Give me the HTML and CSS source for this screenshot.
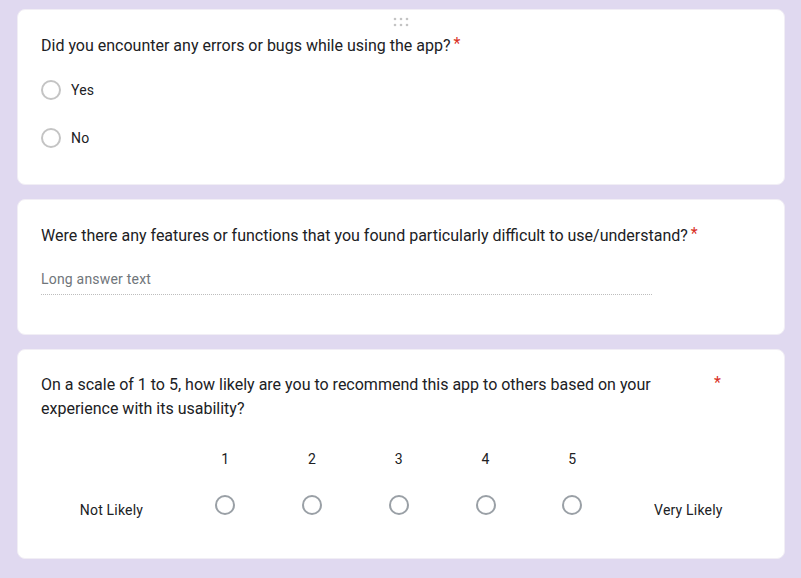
FILE: index.html
```
<!DOCTYPE html>
<html lang="en">
<head>
<meta charset="utf-8">
<title>Usability survey</title>
<link rel="stylesheet" href="styles.css">
</head>
<body>
<div class="page">
  <section class="card card-first">
    <div class="drag-handle">
      <svg width="16" height="10" viewBox="0 0 16 10"><g fill="#c4c4c4"><circle cx="2" cy="2" r="1.3"/><circle cx="8" cy="2" r="1.3"/><circle cx="14" cy="2" r="1.3"/><circle cx="2" cy="8" r="1.3"/><circle cx="8" cy="8" r="1.3"/><circle cx="14" cy="8" r="1.3"/></g></svg>
    </div>
    <div class="title"><span class="title-text">Did you encounter any errors or bugs while using the app?</span><span class="req">*</span></div>
    <div class="options">
      <div class="option"><span class="radio"></span><span class="option-label">Yes</span></div>
      <div class="option"><span class="radio"></span><span class="option-label">No</span></div>
    </div>
  </section>

  <section class="card card-second">
    <div class="title"><span class="title-text">Were there any features or functions that you found particularly difficult to use/understand?</span><span class="req">*</span></div>
    <div class="long-answer">Long answer text</div>
  </section>

  <section class="card card-third">
    <div class="title"><span class="title-text">On a scale of 1 to 5, how likely are you to recommend this app to others based on your experience with its usability?</span><span class="req">*</span></div>
    <div class="scale">
      <span class="num n1">1</span>
      <span class="num n2">2</span>
      <span class="num n3">3</span>
      <span class="num n4">4</span>
      <span class="num n5">5</span>
      <span class="scale-label left">Not Likely</span>
      <span class="scale-radio c1"><span class="radio dark"></span></span>
      <span class="scale-radio c2"><span class="radio dark"></span></span>
      <span class="scale-radio c3"><span class="radio dark"></span></span>
      <span class="scale-radio c4"><span class="radio dark"></span></span>
      <span class="scale-radio c5"><span class="radio dark"></span></span>
      <span class="scale-label right">Very Likely</span>
    </div>
  </section>
</div>
</body>
</html>
```

FILE: styles.css
```
* { box-sizing: border-box; }

html, body {
  margin: 0;
  padding: 0;
  background: #e0d9f0;
}

body {
  font-family: Roboto, "Liberation Sans", Arial, sans-serif;
  color: #202124;
}

.page {
  padding: 9px 16px 0 17px;
  display: flex;
  flex-direction: column;
  gap: 14px;
}

.card {
  position: relative;
  background: #ffffff;
  border: 1px solid #f1eef5;
  border-radius: 8px;
  padding: 23px;
}

.drag-handle {
  position: absolute;
  top: 7px;
  left: 50%;
  margin-left: -8px;
  width: 16px;
  height: 10px;
  line-height: 0;
}

.title {
  display: flex;
  align-items: flex-start;
  max-width: 680px;
  font-size: 16px;
  line-height: 24px;
}

.title-text {
  flex: 0 1 auto;
}

.req {
  flex: 0 0 auto;
  color: #d93025;
  margin-left: 3px;
  line-height: 20px;
}

.card-first {
  padding-top: 24px;
  padding-bottom: 22px;
}

.options {
  margin-top: 8px;
  display: flex;
  flex-direction: column;
}

.option {
  height: 48px;
  display: flex;
  align-items: center;
  gap: 10px;
  font-size: 14px;
  letter-spacing: 0.2px;
}

.radio {
  display: block;
  width: 20px;
  height: 20px;
  border: 2px solid #c4c4c4;
  border-radius: 50%;
  flex: 0 0 auto;
}

.radio.dark {
  border-color: #9aa0a6;
}

.card-second {
  padding-top: 24px;
  padding-bottom: 39px;
}

.long-answer {
  margin-top: 15px;
  width: 611px;
  padding: 6px 0 5px;
  font-size: 14px;
  line-height: 20px;
  letter-spacing: 0.2px;
  color: #70757a;
  border-bottom: 1px dotted #bdbdbd;
}

.card-third {
  padding-bottom: 29px;
}

.scale {
  margin-top: 23px;
  display: grid;
  grid-template-columns: 141px repeat(5, 86.75px) 1fr;
  grid-template-rows: 30px 48px;
  row-gap: 7px;
  width: 720px;
  font-size: 14px;
  line-height: 20px;
  letter-spacing: 0.2px;
}

.num {
  grid-row: 1;
  display: flex;
  align-items: center;
  justify-content: center;
}

.n1, .c1 { grid-column: 2; }
.n2, .c2 { grid-column: 3; }
.n3, .c3 { grid-column: 4; }
.n4, .c4 { grid-column: 5; }
.n5, .c5 { grid-column: 6; }

.scale-radio {
  grid-row: 2;
  display: flex;
  align-items: center;
  justify-content: center;
}

.scale-label {
  grid-row: 2;
  align-self: end;
  margin-bottom: 9px;
  text-align: center;
}

.scale-label.left { grid-column: 1; }
.scale-label.right { grid-column: 7; }
```
